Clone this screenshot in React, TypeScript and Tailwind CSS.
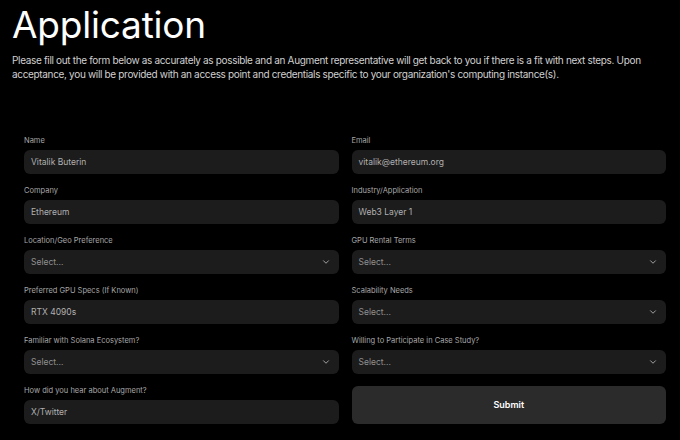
import { ChevronDown } from "lucide-react";

type Field = { label: string; value?: string; select?: boolean };

const FIELDS: Field[] = [
  { label: "Name", value: "Vitalik Buterin" },
  { label: "Email", value: "vitalik@ethereum.org" },
  { label: "Company", value: "Ethereum" },
  { label: "Industry/Application", value: "Web3 Layer 1" },
  { label: "Location/Geo Preference", select: true },
  { label: "GPU Rental Terms", select: true },
  { label: "Preferred GPU Specs (If Known)", value: "RTX 4090s" },
  { label: "Scalability Needs", select: true },
  { label: "Familiar with Solana Ecosystem?", select: true },
  { label: "Willing to Participate in Case Study?", select: true },
  { label: "How did you hear about Augment?", value: "X/Twitter" },
];

function FormField({ label, value, select }: Field) {
  return (
    <div className="flex flex-col">
      <label className="text-[7.5px] leading-[12px] text-[#a8a8a8]">{label}</label>
      <div className="mt-[3px] h-[24px] rounded-[6px] bg-[#1c1c1c] pl-[7px] pr-[8px] flex items-center justify-between">
        {select ? (
          <>
            <span className="text-[8.5px] text-[#8f8f8f]">Select...</span>
            <ChevronDown className="w-[10px] h-[10px] text-[#bdbdbd]" strokeWidth={2} />
          </>
        ) : (
          <span className="text-[8.5px] text-[#b0b0b0]">{value}</span>
        )}
      </div>
    </div>
  );
}

export default function App() {
  return (
    <div className="w-[680px] h-[440px] bg-black text-white overflow-hidden font-['Inter',sans-serif]">
      <div className="px-[12px] pt-[3px]">
        <h1 className="text-[37px] leading-[44px] tracking-[-0.2px] font-normal">Application</h1>
        <p className="mt-[6px] text-[10px] leading-[14px] tracking-[-0.33px] text-[#d0d0d0]">
          Please fill out the form below as accurately as possible and an Augment representative will get back to you if there is a fit with next steps. Upon acceptance, you will be provided with an access point and credentials specific to your organization's computing instance(s).
        </p>
      </div>

      {/* Two-column application form */}
      <form className="mt-[54px] ml-[24px] mr-[14px] grid grid-cols-2 gap-x-[13px] gap-y-[11px]">
        {FIELDS.map((f) => (
          <FormField key={f.label} {...f} />
        ))}
        <button
          type="button"
          className="self-end h-[38px] rounded-[6px] bg-[#2b2b2b] text-[9px] font-semibold text-white"
        >
          Submit
        </button>
      </form>
    </div>
  );
}
